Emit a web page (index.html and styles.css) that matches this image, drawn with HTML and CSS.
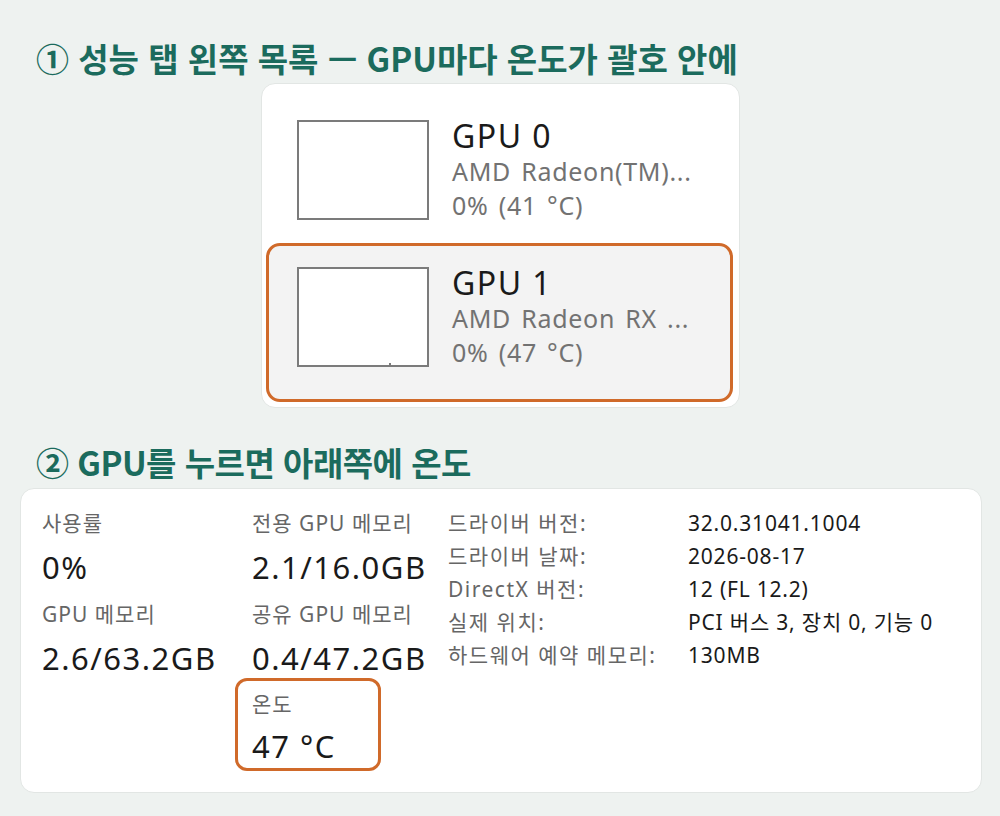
FILE: index.html
```html
<!DOCTYPE html>
<html lang="ko">
<head>
<meta charset="utf-8">
<title>GPU 온도</title>
<link rel="stylesheet" href="styles.css">
</head>
<body>
  <h2 class="title title-1">① 성능 탭 왼쪽 목록 — GPU마다 온도가 괄호 안에</h2>
  <div class="card list-card">
    <div class="gpu-item item-first">
      <div class="thumb"></div>
      <div class="gpu-text">
        <div class="gpu-name">GPU 0</div>
        <div class="gpu-sub">AMD Radeon(TM)...</div>
        <div class="gpu-sub">0% (41 °C)</div>
      </div>
    </div>
    <div class="gpu-item item-selected">
      <div class="thumb"><span class="tick"></span></div>
      <div class="gpu-text">
        <div class="gpu-name">GPU 1</div>
        <div class="gpu-sub">AMD Radeon RX ...</div>
        <div class="gpu-sub">0% (47 °C)</div>
      </div>
    </div>
  </div>

  <h2 class="title title-2">② GPU를 누르면 아래쪽에 온도</h2>
  <div class="card detail-card">
    <div class="stat-col col-1">
      <div class="stat">
        <div class="stat-label">사용률</div>
        <div class="stat-value">0%</div>
      </div>
      <div class="stat">
        <div class="stat-label">GPU 메모리</div>
        <div class="stat-value">2.6/63.2GB</div>
      </div>
    </div>
    <div class="stat-col col-2">
      <div class="stat">
        <div class="stat-label">전용 GPU 메모리</div>
        <div class="stat-value">2.1/16.0GB</div>
      </div>
      <div class="stat">
        <div class="stat-label">공유 GPU 메모리</div>
        <div class="stat-value">0.4/47.2GB</div>
      </div>
      <div class="stat stat-temp">
        <div class="stat-label">온도</div>
        <div class="stat-value">47 °C</div>
      </div>
    </div>
    <div class="info-grid">
      <div class="info-label">드라이버 버전:</div><div class="info-value">32.0.31041.1004</div>
      <div class="info-label">드라이버 날짜:</div><div class="info-value">2026-08-17</div>
      <div class="info-label">DirectX 버전:</div><div class="info-value">12 (FL 12.2)</div>
      <div class="info-label">실제 위치:</div><div class="info-value">PCI 버스 3, 장치 0, 기능 0</div>
      <div class="info-label">하드웨어 예약 메모리:</div><div class="info-value">130MB</div>
    </div>
  </div>
</body>
</html>
```

FILE: styles.css
```css
html, body {
  margin: 0;
  padding: 0;
}
body {
  background: #eef2f0;
  font-family: "Noto Sans", "Noto Sans CJK KR", sans-serif;
  color: #1a1a1a;
  width: 1000px;
  height: 816px;
  overflow: hidden;
}
.title {
  margin: 0;
  padding-left: 36px;
  font-family: "Noto Sans CJK KR", "Noto Sans", sans-serif;
  font-weight: 700;
  font-size: 33px;
  line-height: 40px;
  color: #1b6b5d;
  white-space: nowrap;
}
.title-1 {
  margin-top: 38px;
}
.title-2 {
  margin-top: 34px;
  letter-spacing: -0.5px;
}
.card {
  background: #fff;
  border: 1px solid #e2e6e4;
  border-radius: 14px;
  box-sizing: border-box;
}
.list-card {
  margin: 5px 0 0 261px;
  width: 479px;
  height: 325px;
  padding: 12px 6px 9px 4px;
  display: flex;
  flex-direction: column;
}
.gpu-item {
  display: flex;
  align-items: flex-start;
  gap: 23px;
  border: 3px solid transparent;
  border-radius: 14px;
  padding: 21px 28px 18px 28px;
}
.item-selected {
  border-color: #d06a2a;
  background: #f3f3f3;
  padding-bottom: 30px;
}
.thumb {
  width: 132px;
  height: 100px;
  box-sizing: border-box;
  border: 2px solid #7b7b7b;
  background: #fff;
  position: relative;
  flex: none;
}
.tick {
  position: absolute;
  left: 90px;
  bottom: 0;
  width: 2px;
  height: 2px;
  background: #7b7b7b;
}
.gpu-text {
  margin-top: -2px;
  white-space: nowrap;
}
.gpu-name {
  font-size: 32px;
  line-height: 36px;
  letter-spacing: 1.5px;
  color: #1a1a1a;
}
.gpu-sub {
  font-size: 25px;
  line-height: 34px;
  letter-spacing: 0.7px;
  word-spacing: 3px;
  color: #727272;
}
.detail-card {
  margin: 6px 0 0 20px;
  width: 962px;
  height: 305px;
  padding: 15px 0 0 21px;
  display: flex;
  align-items: flex-start;
}
.stat-col {
  display: flex;
  flex-direction: column;
  white-space: nowrap;
}
.col-1 {
  width: 210px;
}
.col-2 {
  width: 196px;
}
.stat {
  height: 91px;
}
.stat-label {
  font-size: 21px;
  line-height: 38px;
  letter-spacing: 1px;
  color: #666;
}
.stat-value {
  font-size: 31px;
  line-height: 50px;
  letter-spacing: 1.5px;
  color: #1a1a1a;
}
.stat-temp {
  margin: -8px 0 0 -17px;
  width: 146px;
  height: auto;
  box-sizing: border-box;
  border: 3px solid #d06a2a;
  border-radius: 12px;
  padding: 3px 0 0 14px;
}
.stat-temp .stat-label {
  line-height: 40px;
}
.stat-temp .stat-value {
  line-height: 44px;
}
.info-grid {
  display: grid;
  grid-template-columns: 240px auto;
  grid-auto-rows: 33px;
  margin-top: 3px;
  font-size: 21px;
  line-height: 33px;
  white-space: nowrap;
}
.info-label {
  color: #666;
  letter-spacing: 1.5px;
}
.info-value {
  color: #1a1a1a;
  letter-spacing: 0.8px;
}
```
